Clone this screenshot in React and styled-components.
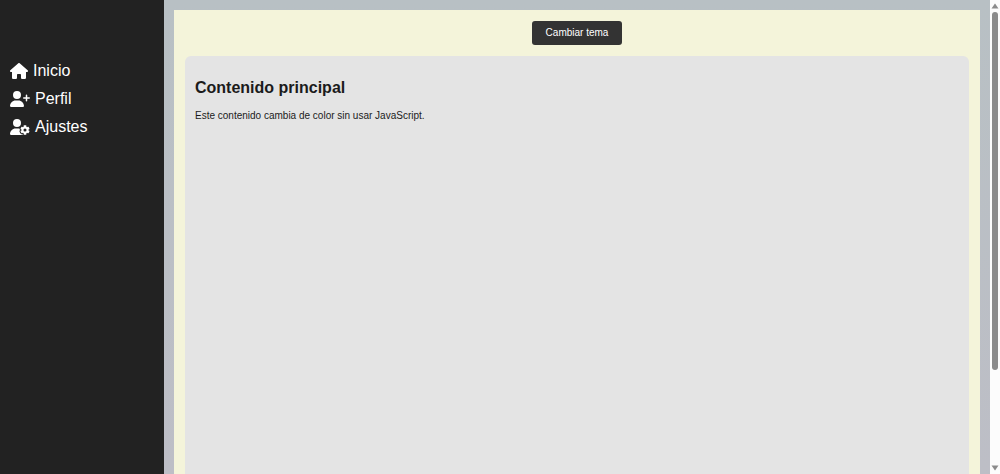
import React from "react";
import styled, { createGlobalStyle } from "styled-components";
import { FaHouse, FaUserPlus, FaUserGear } from "react-icons/fa6";

const GlobalStyle = createGlobalStyle`
  * { box-sizing: border-box; }
  body {
    margin: 0;
    font-family: "Liberation Sans", Arial, sans-serif;
    color: #1b1b1b;
  }
`;

const Page = styled.div`
  display: flex;
  height: 100vh;
  overflow: hidden;
`;

const Sidebar = styled.nav`
  flex: 0 0 164px;
  padding: 60px 10px 0;
  background: #222;
`;

const Menu = styled.ul`
  list-style: none;
  margin: 0;
  padding: 0;
  display: flex;
  flex-direction: column;
  gap: 6px;
`;

const MenuLink = styled.a`
  display: flex;
  align-items: center;
  gap: 5px;
  color: #fff;
  font-size: 16px;
  line-height: 22px;
  text-decoration: none;

  svg {
    flex: none;
    width: ${({ $iconWidth }) => $iconWidth}px;
    height: 16px;
  }
`;

const Backdrop = styled.div`
  flex: 1;
  min-width: 0;
  padding: 10px 10px 0;
  background: linear-gradient(#b8c0c4, #bdbec6);
`;

const Main = styled.main`
  display: flex;
  flex-direction: column;
  align-items: center;
  gap: 11px;
  height: 100%;
  padding: 11px 11px 0;
  background: #f4f4da;
`;

const ThemeButton = styled.button`
  padding: 0 14px;
  border: 0;
  border-radius: 3px;
  background: #333;
  color: #fff;
  font: 10px/24px "Liberation Sans", Arial, sans-serif;
`;

const Content = styled.section`
  flex: 1;
  align-self: stretch;
  padding: 22px 10px;
  border-radius: 6px 6px 0 0;
  background: #e4e4e4;
`;

const Title = styled.h1`
  margin: 0 0 10px;
  font-size: 16px;
  line-height: 20px;
`;

const Text = styled.p`
  margin: 0;
  font-size: 10px;
  line-height: 16px;
`;

const ScrollTrack = styled.div`
  flex: 0 0 10px;
  display: flex;
  flex-direction: column;
  align-items: center;
  gap: 3px;
  padding: 3px 0;
  background: #fcfcfc;
`;

const Arrow = styled.svg`
  flex: none;
  width: 8px;
  height: 6px;
  fill: #8b8b8b;
`;

const Thumb = styled.div`
  flex: 358;
  width: 6px;
  border-radius: 3px;
  background: #8b8b8b;
`;

const TrackRest = styled.div`
  flex: 89;
`;

const links = [
  { label: "Inicio", Icon: FaHouse, width: 18 },
  { label: "Perfil", Icon: FaUserPlus, width: 20 },
  { label: "Ajustes", Icon: FaUserGear, width: 20 },
];

export default function App() {
  return (
    <Page>
      <GlobalStyle />
      <Sidebar>
        <Menu>
          {links.map(({ label, Icon, width }) => (
            <li key={label}>
              <MenuLink href="#" $iconWidth={width}>
                <Icon aria-hidden="true" />
                {label}
              </MenuLink>
            </li>
          ))}
        </Menu>
      </Sidebar>
      <Backdrop>
        <Main>
          <ThemeButton type="button">Cambiar tema</ThemeButton>
          <Content>
            <Title>Contenido principal</Title>
            <Text>Este contenido cambia de color sin usar JavaScript.</Text>
          </Content>
        </Main>
      </Backdrop>
      <ScrollTrack aria-hidden="true">
        <Arrow viewBox="0 0 8 6"><path d="M4 0.5 7.5 5.5H.5Z" /></Arrow>
        <Thumb />
        <TrackRest />
        <Arrow viewBox="0 0 8 6"><path d="M.5 .5H7.5L4 5.5Z" /></Arrow>
      </ScrollTrack>
    </Page>
  );
}
